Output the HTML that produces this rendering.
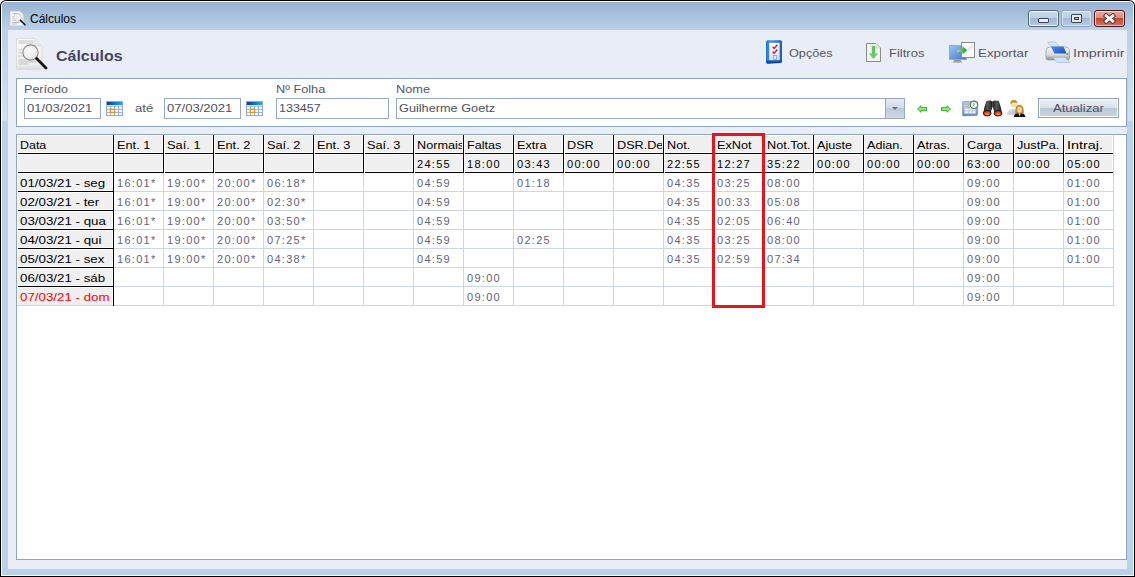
<!DOCTYPE html>
<html><head><meta charset="utf-8">
<style>
*{margin:0;padding:0;box-sizing:border-box}
html,body{width:1135px;height:577px;overflow:hidden;background:#fff}
body{position:relative;font-family:"Liberation Sans", sans-serif;font-size:11px;color:#000}
.ab{position:absolute}
.t{position:absolute;white-space:nowrap;line-height:13px;transform-origin:0 0}
.gl{position:absolute;background:#c9d6e8}
.bk{position:absolute;background:#000}
</style></head><body>
<div class="ab" style="left:0;top:0;width:1135px;height:577px;background:#000;border-radius:6px 6px 0 0"></div><div class="ab" style="left:1px;top:1px;width:1133px;height:575px;background:#fff;border-radius:5px 5px 0 0"></div><div class="ab" style="left:2px;top:2px;width:1131px;height:573px;background:#b9d1ea;border-radius:4px 4px 0 0"></div><div class="ab" style="left:2px;top:2px;width:1131px;height:28px;background:linear-gradient(#99b3d2,#b9d1ea);border-radius:4px 4px 0 0"></div><div class="ab" style="left:2px;top:30px;width:5px;height:91px;background:linear-gradient(#b9d1ea,#d2e2f3)"></div><div class="ab" style="left:1128px;top:30px;width:5px;height:91px;background:linear-gradient(#b9d1ea,#d2e2f3)"></div><div class="ab" style="left:8px;top:30px;width:1119px;height:539px;background:#e9eef6"></div><div class="t" style="left:30px;top:12px;font-size:12px;line-height:14px;letter-spacing:0;color:#000">Cálculos</div><div class="ab" style="left:1028px;top:10px;width:31px;height:17px;border:1px solid #56657c;border-radius:3px;background:linear-gradient(#c8d9ee 0,#bccfe7 7px,#9fb7d5 7px,#b4cae4 100%);box-shadow:inset 0 0 0 1px rgba(255,255,255,.8)"></div><div class="ab" style="left:1061px;top:10px;width:31px;height:17px;border:1px solid #8ea4c0;border-radius:3px;background:linear-gradient(#c6d8ed 0,#bbcfe7 7px,#a4bbd8 7px,#b6cce5 100%);box-shadow:inset 0 0 0 1px rgba(255,255,255,.55)"></div><div class="ab" style="left:1094px;top:10px;width:31px;height:17px;border:1px solid #4a1620;border-radius:3px;background:linear-gradient(#eaa898 0,#dc8c7a 7px,#c4442c 7px,#d8735f 100%);box-shadow:inset 0 0 0 1px rgba(255,225,215,.75)"></div><div class="ab" style="left:1038px;top:18px;width:11px;height:5px;background:#ececec;border:1px solid #3b4558;border-radius:1px"></div><div class="ab" style="left:1071px;top:14px;width:11px;height:9px;background:#e8e8e8;border:1px solid #3b4558;border-radius:1px"></div><div class="ab" style="left:1074px;top:17px;width:5px;height:3px;background:#9fb6d2;border:1px solid #3b4558"></div><svg class="ab" style="left:1103px;top:13px" width="14" height="11" viewBox="0 0 14 11">
<path d="M3.2 2.8 L9.8 8.2 M9.8 2.8 L3.2 8.2" stroke="#3a3f52" stroke-width="4.8" stroke-linecap="square"/>
<path d="M3.2 2.8 L9.8 8.2 M9.8 2.8 L3.2 8.2" stroke="#f2f2f2" stroke-width="2.8" stroke-linecap="square"/>
</svg><svg class="ab" style="left:10px;top:10px" width="17" height="17" viewBox="0 0 17 17">
<path d="M0.5 1.5 H10 L13 4.5 V15.5 H0.5 Z" fill="#f7f7f5" stroke="#e2e2dc" stroke-width="1"/>
<path d="M2 3.5h6M2 7h2M2 10h2M2 12.5h8M2 14h5" stroke="#b0b0b0" stroke-width="0.8"/>
<circle cx="7.5" cy="7.5" r="3.8" fill="#f0f2f4" stroke="#c4c8cc" stroke-width="0.9"/>
<path d="M10.5 10.4 L15 14.8" stroke="#111" stroke-width="1.6" stroke-linecap="round"/>
</svg><svg class="ab" style="left:16px;top:38px" width="33" height="33" viewBox="0 0 33 33">
<defs><linearGradient id="pg" x1="0" y1="0" x2="0" y2="1"><stop offset="0" stop-color="#f8f8f8"/><stop offset="0.85" stop-color="#eeeeee"/><stop offset="1" stop-color="#d8d8d8"/></linearGradient>
<radialGradient id="lg" cx="0.4" cy="0.4" r="0.7"><stop offset="0" stop-color="#fafafa"/><stop offset="1" stop-color="#e2e4e6"/></radialGradient></defs>
<path d="M0.5 0.5 H18 L26 8.5 V31.5 H0.5 Z" fill="url(#pg)" stroke="#dedede"/>
<path d="M18 0.5 V8.5 H26 Z" fill="#e4e4e4"/>
<path d="M2.5 3h15M2.5 5h15M2.5 12h5M2.5 15h5M2.5 18h5M2.5 22h20M2.5 24h18M2.5 26h10" stroke="#c4c4c4" stroke-width="1.2"/>
<circle cx="14.5" cy="14.5" r="7.6" fill="url(#lg)" stroke="#8a8a8a" stroke-width="1.1"/>
<path d="M20.6 20.6 L30 30" stroke="#151515" stroke-width="2.8" stroke-linecap="round"/>
</svg><div class="t" style="left:56px;top:46.5px;font-size:15.5px;line-height:18px;font-weight:bold;transform:scaleX(1.03);color:#45455f">Cálculos</div><div class="t" style="left:789px;top:47px;color:#555568;transform:scaleX(1.152);">Opções</div><div class="t" style="left:889px;top:47px;color:#555568;transform:scaleX(1.184);">Filtros</div><div class="t" style="left:978px;top:47px;color:#555568;transform:scaleX(1.211);">Exportar</div><div class="t" style="left:1073px;top:47px;color:#555568;transform:scaleX(1.299);">Imprimir</div><svg class="ab" style="left:765px;top:39px" width="18" height="26" viewBox="0 0 18 26">
<defs><linearGradient id="og" x1="0" y1="0" x2="1" y2="0"><stop offset="0" stop-color="#2a70d0"/><stop offset="0.3" stop-color="#4a98ea"/><stop offset="1" stop-color="#1a5cc0"/></linearGradient>
<linearGradient id="oi" x1="0" y1="0" x2="0" y2="1"><stop offset="0" stop-color="#ffffff"/><stop offset="1" stop-color="#d6e4f6"/></linearGradient></defs>
<path d="M1 3 Q1 1.2 3 1.2 H15.5 Q17 1.2 17 3 V22 Q17 23.5 15.5 23.6 L3 24.6 Q1 24.8 1 23 Z" fill="url(#og)"/>
<path d="M1.5 21.5 H17 V22.5 Q17 23.8 15.5 23.9 L3 24.7 Q1.3 24.8 1.3 23 Z" fill="#0f4aa8"/>
<rect x="4.2" y="3.8" width="10.4" height="17.4" fill="url(#oi)"/>
<path d="M7.6 7.8 l1.6 1.6 l3.2 -3.6 M7.6 12.6 l1.6 1.6 l3.2 -3.6" stroke="#d42828" stroke-width="1.5" fill="none"/>
<rect x="8.3" y="16.5" width="3.4" height="4" fill="none" stroke="#86a4d4" stroke-width="0.9"/>
</svg><svg class="ab" style="left:866px;top:43px" width="16" height="20" viewBox="0 0 16 20">
<path d="M0.5 0.5 H10 L14.5 5 V18.5 H0.5 Z" fill="#f4f4f4" stroke="#8a8a8a"/>
<path d="M10 0.5 V5 H14.5" fill="#e8e8e8" stroke="#c8c8c8" stroke-width="0.6"/>
<path d="M7.5 3 V12" stroke="#62c462" stroke-width="3.4"/>
<path d="M2.8 10.5 L7.5 16 L12.2 10.5 Z" fill="#6ccc6c"/>
</svg><svg class="ab" style="left:949px;top:42px" width="27" height="22" viewBox="0 0 27 22">
<defs><linearGradient id="sc" x1="0" y1="0" x2="1" y2="1"><stop offset="0" stop-color="#9cc6f6"/><stop offset="1" stop-color="#3f74c8"/></linearGradient>
<linearGradient id="ar" x1="0" y1="0" x2="1" y2="0"><stop offset="0" stop-color="#c8ea90"/><stop offset="0.5" stop-color="#5cc050"/><stop offset="1" stop-color="#139a2a"/></linearGradient>
<linearGradient id="st" x1="0" y1="0" x2="0" y2="1"><stop offset="0" stop-color="#888"/><stop offset="1" stop-color="#c4c4c4"/></linearGradient></defs>
<rect x="0.5" y="3.5" width="17" height="14" fill="url(#sc)" stroke="#a8a8a8" stroke-width="1"/>
<path d="M5.5 18 H11.5 L13.5 21 H3.5 Z" fill="url(#st)"/>
<rect x="12.5" y="0.5" width="13" height="15" fill="#fbfbfb" stroke="#8a8a8a" stroke-width="1"/>
<path d="M24 3 L15 12" stroke="#ececec" stroke-width="3"/>
<path d="M7.5 10 Q9 7 13.5 6.6 V4 L18 8.2 L13.5 12.6 V10 Q10 9.5 7.5 10 Z" fill="url(#ar)"/>
</svg><svg class="ab" style="left:1045px;top:41px" width="26" height="23" viewBox="0 0 26 23">
<defs><linearGradient id="pb" x1="0" y1="0" x2="0" y2="1"><stop offset="0" stop-color="#f4f4f4"/><stop offset="0.6" stop-color="#dcdcdc"/><stop offset="1" stop-color="#8a8a8a"/></linearGradient>
<linearGradient id="pbl" x1="0" y1="0" x2="1" y2="1"><stop offset="0" stop-color="#4a90f0"/><stop offset="1" stop-color="#1a4fc0"/></linearGradient></defs>
<path d="M2.5 1 H10 L16 7 H8 Z" fill="#d6e6fa" stroke="#a8bcd8" stroke-width="0.7"/>
<path d="M1 10 Q1 6 5 6 H20 Q24.5 6 24.5 10 V17.5 Q24.5 19 22 19 H3 Q1 19 1 17 Z" fill="url(#pb)" stroke="#9a9a9a" stroke-width="0.7"/>
<path d="M6 5.5 H18.5 L21.5 12.5 H9.5 Z" fill="url(#pbl)"/>
<path d="M8 16.5 H20 L25 21.5 H12 Z" fill="#d2e2f8" stroke="#a8bcd8" stroke-width="0.7"/>
<rect x="21.5" y="12" width="2" height="2" fill="#3c3"/>
</svg><div class="ab" style="left:16px;top:78px;width:1111px;height:49px;background:#fff;border:1px solid #8ea4c2"></div><div class="t" style="left:24px;top:83px;color:#555568;transform:scaleX(1.142);">Período</div><div class="t" style="left:276px;top:83px;color:#555568;transform:scaleX(1.159);">Nº Folha</div><div class="t" style="left:396px;top:83px;color:#555568;transform:scaleX(1.159);">Nome</div><div class="ab" style="left:24px;top:98px;width:77px;height:21px;background:#fff;border:1px solid #96a9c8"></div><div class="t" style="left:27px;top:102px;color:#505060;transform:scaleX(1.187);">01/03/2021</div><div class="ab" style="left:164px;top:98px;width:77px;height:21px;background:#fff;border:1px solid #96a9c8"></div><div class="t" style="left:167px;top:102px;color:#505060;transform:scaleX(1.187);">07/03/2021</div><div class="ab" style="left:276px;top:98px;width:113px;height:21px;background:#fff;border:1px solid #96a9c8"></div><div class="t" style="left:279px;top:102px;color:#505060;transform:scaleX(1.135);">133457</div><div class="ab" style="left:396px;top:98px;width:509px;height:21px;background:#fff;border:1px solid #96a9c8"></div><div class="t" style="left:399px;top:102px;color:#505060;transform:scaleX(1.156);">Guilherme Goetz</div><div class="t" style="left:135px;top:102px;color:#555568;transform:scaleX(1.201);">até</div><svg class="ab" style="left:106px;top:101px" width="17" height="15" viewBox="0 0 17 15">
<defs><linearGradient id="cg106" x1="0" y1="0" x2="1" y2="0"><stop offset="0" stop-color="#12388e"/><stop offset="1" stop-color="#10b0f4"/></linearGradient></defs>
<rect x="0.5" y="0.5" width="16" height="14" fill="#fff" stroke="#8eaad8" stroke-width="1"/>
<rect x="1" y="1" width="15" height="3" fill="url(#cg106)"/>
<path d="M0.5 5.2H16.5M0.5 8.3H16.5M0.5 11.4H16.5M4.5 5V14.5M8.5 5V14.5M12.5 5V14.5" stroke="#92aedc" stroke-width="1"/>
<rect x="4.3" y="8.3" width="4.4" height="3.1" fill="#fff" stroke="#f39200" stroke-width="1.2"/>
</svg><svg class="ab" style="left:246px;top:101px" width="17" height="15" viewBox="0 0 17 15">
<defs><linearGradient id="cg246" x1="0" y1="0" x2="1" y2="0"><stop offset="0" stop-color="#12388e"/><stop offset="1" stop-color="#10b0f4"/></linearGradient></defs>
<rect x="0.5" y="0.5" width="16" height="14" fill="#fff" stroke="#8eaad8" stroke-width="1"/>
<rect x="1" y="1" width="15" height="3" fill="url(#cg246)"/>
<path d="M0.5 5.2H16.5M0.5 8.3H16.5M0.5 11.4H16.5M4.5 5V14.5M8.5 5V14.5M12.5 5V14.5" stroke="#92aedc" stroke-width="1"/>
<rect x="4.3" y="8.3" width="4.4" height="3.1" fill="#fff" stroke="#f39200" stroke-width="1.2"/>
</svg><div class="ab" style="left:885px;top:98px;width:20px;height:21px;border:1px solid #96a9c8;background:linear-gradient(#e6eaf3 0,#d3dbe7 9px,#bac8da 9px,#cfd8e5 100%)"></div><div class="ab" style="left:892px;top:107px;width:0;height:0;border-left:3px solid transparent;border-right:3px solid transparent;border-top:3px solid #6c6c76"></div><svg class="ab" style="left:916px;top:104px" width="12" height="10" viewBox="0 0 12 10">
<path d="M1.5 5 L5 1.7 V3.4 H10.5 V6.6 H5 V8.3 Z" fill="#98e47a" stroke="#33b533" stroke-width="1" stroke-linejoin="round"/></svg><svg class="ab" style="left:940px;top:104px" width="12" height="10" viewBox="0 0 12 10">
<path d="M10.5 5 L7 1.7 V3.4 H1.5 V6.6 H7 V8.3 Z" fill="#98e47a" stroke="#33b533" stroke-width="1" stroke-linejoin="round"/></svg><svg class="ab" style="left:962px;top:100px" width="17" height="17" viewBox="0 0 17 17">
<defs><linearGradient id="cc" x1="0" y1="0" x2="0" y2="1"><stop offset="0" stop-color="#b4cdf0"/><stop offset="1" stop-color="#5f88c8"/></linearGradient></defs>
<path d="M0.6 2.2 Q0.6 1.6 1.4 1.6 H15 Q15.6 1.6 15.6 2.4 V14.6 Q15.6 15.4 14.8 15.5 L1.6 15.9 Q0.6 15.9 0.6 15 Z" fill="url(#cc)" stroke="#6b8fc8" stroke-width="0.7"/>
<rect x="2.5" y="5" width="11" height="8.5" fill="#f4f7fc"/>
<path d="M2.5 8.2H13.5M2.5 10.8H13.5M6.8 5V13.5M10.2 5V13.5" stroke="#aabbd6" stroke-width="0.8"/>
<rect x="2.7" y="5.3" width="5" height="2.6" fill="#dcae98"/>
<circle cx="12" cy="4.8" r="3.7" fill="#eef8ee" stroke="#43803f" stroke-width="1.1"/>
<path d="M12 2.8 V5 L10.8 6" stroke="#667" stroke-width="0.7" fill="none"/>
</svg><svg class="ab" style="left:983px;top:100px" width="20" height="18" viewBox="0 0 20 18">
<defs><linearGradient id="bg1" x1="0" y1="0" x2="1" y2="0"><stop offset="0" stop-color="#1a1a1a"/><stop offset="0.45" stop-color="#5a5a5a"/><stop offset="1" stop-color="#151515"/></linearGradient>
<radialGradient id="ln" cx="0.5" cy="0.7" r="0.6"><stop offset="0" stop-color="#ffb070"/><stop offset="0.5" stop-color="#f04a1a"/><stop offset="1" stop-color="#b81c08"/></radialGradient></defs>
<path d="M3.5 0.8 L7.5 0.5 L9.6 1.5 L9.6 6.5 L7.8 12 L0.6 12 L1.2 8 Z" fill="url(#bg1)"/>
<path d="M15.7 0.8 L11.7 0.5 L9.6 1.5 L9.6 6.5 L11.4 12 L18.6 12 L18 8 Z" fill="url(#bg1)"/>
<ellipse cx="4.2" cy="13.2" rx="3.9" ry="2.8" fill="url(#ln)" stroke="#1c1c1c" stroke-width="1"/>
<ellipse cx="15" cy="13.2" rx="3.9" ry="2.8" fill="url(#ln)" stroke="#1c1c1c" stroke-width="1"/>
</svg><svg class="ab" style="left:1004px;top:98px" width="25" height="21" viewBox="0 0 25 21">
<defs><linearGradient id="mb" x1="0" y1="0" x2="1" y2="1"><stop offset="0" stop-color="#dfe2f0"/><stop offset="1" stop-color="#b4b8d4"/></linearGradient></defs>
<path d="M3 16.8 Q3.3 11 9.5 11 Q13.5 11 13.5 16.8 Z" fill="url(#mb)"/>
<ellipse cx="9.8" cy="6.3" rx="2.9" ry="3.4" fill="#f8dab0"/>
<path d="M6.3 6.5 Q5.8 2 9.8 2 Q13.6 2 13.4 6 Q12.5 3.8 9 4.5 Q7.5 5 6.3 6.5 Z" fill="#b98a2c"/>
<path d="M11.3 15.2 Q10.8 6.8 15.6 6.8 Q20.4 6.8 19.8 15.2 Z" fill="#c08e32"/>
<ellipse cx="15.6" cy="11.8" rx="2.3" ry="3" fill="#f8d2a4"/>
<path d="M9.8 19 Q10.2 15.3 14 15.2 H17.2 Q21 15.3 21.3 19 Z" fill="#111"/>
<path d="M14.4 15.2 L15.6 18.6 L16.8 15.2 Z" fill="#f0c890"/>
</svg><div class="ab" style="left:1038px;top:98px;width:81px;height:20px;border:1px solid #8fa5c4;background:linear-gradient(#eef1f5 0,#d9e0ea 9px,#b7c5d8 9px,#cdd7e4 100%);box-shadow:inset 0 0 0 1px #fff"></div><div class="t" style="left:1053px;top:102px;color:#505060;transform:scaleX(1.186);">Atualizar</div><div class="ab" style="left:16px;top:134px;width:1111px;height:426px;background:#fff;border:1px solid #8ea6c6"></div><div class="ab" style="left:17px;top:135px;width:96px;height:18px;background:#f0f0f0;border:1px solid #fff"></div><div class="bk" style="left:113px;top:135px;width:1px;height:19px"></div><div class="bk" style="left:18px;top:153px;width:95px;height:1px"></div><div class="ab" style="left:114px;top:135px;width:49px;height:18px;background:#f0f0f0;border:1px solid #fff"></div><div class="bk" style="left:163px;top:135px;width:1px;height:19px"></div><div class="bk" style="left:115px;top:153px;width:48px;height:1px"></div><div class="ab" style="left:164px;top:135px;width:49px;height:18px;background:#f0f0f0;border:1px solid #fff"></div><div class="bk" style="left:213px;top:135px;width:1px;height:19px"></div><div class="bk" style="left:165px;top:153px;width:48px;height:1px"></div><div class="ab" style="left:214px;top:135px;width:49px;height:18px;background:#f0f0f0;border:1px solid #fff"></div><div class="bk" style="left:263px;top:135px;width:1px;height:19px"></div><div class="bk" style="left:215px;top:153px;width:48px;height:1px"></div><div class="ab" style="left:264px;top:135px;width:49px;height:18px;background:#f0f0f0;border:1px solid #fff"></div><div class="bk" style="left:313px;top:135px;width:1px;height:19px"></div><div class="bk" style="left:265px;top:153px;width:48px;height:1px"></div><div class="ab" style="left:314px;top:135px;width:49px;height:18px;background:#f0f0f0;border:1px solid #fff"></div><div class="bk" style="left:363px;top:135px;width:1px;height:19px"></div><div class="bk" style="left:315px;top:153px;width:48px;height:1px"></div><div class="ab" style="left:364px;top:135px;width:49px;height:18px;background:#f0f0f0;border:1px solid #fff"></div><div class="bk" style="left:413px;top:135px;width:1px;height:19px"></div><div class="bk" style="left:365px;top:153px;width:48px;height:1px"></div><div class="ab" style="left:414px;top:135px;width:49px;height:18px;background:#f0f0f0;border:1px solid #fff"></div><div class="bk" style="left:463px;top:135px;width:1px;height:19px"></div><div class="bk" style="left:415px;top:153px;width:48px;height:1px"></div><div class="ab" style="left:464px;top:135px;width:49px;height:18px;background:#f0f0f0;border:1px solid #fff"></div><div class="bk" style="left:513px;top:135px;width:1px;height:19px"></div><div class="bk" style="left:465px;top:153px;width:48px;height:1px"></div><div class="ab" style="left:514px;top:135px;width:49px;height:18px;background:#f0f0f0;border:1px solid #fff"></div><div class="bk" style="left:563px;top:135px;width:1px;height:19px"></div><div class="bk" style="left:515px;top:153px;width:48px;height:1px"></div><div class="ab" style="left:564px;top:135px;width:49px;height:18px;background:#f0f0f0;border:1px solid #fff"></div><div class="bk" style="left:613px;top:135px;width:1px;height:19px"></div><div class="bk" style="left:565px;top:153px;width:48px;height:1px"></div><div class="ab" style="left:614px;top:135px;width:49px;height:18px;background:#f0f0f0;border:1px solid #fff"></div><div class="bk" style="left:663px;top:135px;width:1px;height:19px"></div><div class="bk" style="left:615px;top:153px;width:48px;height:1px"></div><div class="ab" style="left:664px;top:135px;width:49px;height:18px;background:#f0f0f0;border:1px solid #fff"></div><div class="bk" style="left:713px;top:135px;width:1px;height:19px"></div><div class="bk" style="left:665px;top:153px;width:48px;height:1px"></div><div class="ab" style="left:714px;top:135px;width:49px;height:18px;background:#f0f0f0;border:1px solid #fff"></div><div class="bk" style="left:763px;top:135px;width:1px;height:19px"></div><div class="bk" style="left:715px;top:153px;width:48px;height:1px"></div><div class="ab" style="left:764px;top:135px;width:49px;height:18px;background:#f0f0f0;border:1px solid #fff"></div><div class="bk" style="left:813px;top:135px;width:1px;height:19px"></div><div class="bk" style="left:765px;top:153px;width:48px;height:1px"></div><div class="ab" style="left:814px;top:135px;width:49px;height:18px;background:#f0f0f0;border:1px solid #fff"></div><div class="bk" style="left:863px;top:135px;width:1px;height:19px"></div><div class="bk" style="left:815px;top:153px;width:48px;height:1px"></div><div class="ab" style="left:864px;top:135px;width:49px;height:18px;background:#f0f0f0;border:1px solid #fff"></div><div class="bk" style="left:913px;top:135px;width:1px;height:19px"></div><div class="bk" style="left:865px;top:153px;width:48px;height:1px"></div><div class="ab" style="left:914px;top:135px;width:49px;height:18px;background:#f0f0f0;border:1px solid #fff"></div><div class="bk" style="left:963px;top:135px;width:1px;height:19px"></div><div class="bk" style="left:915px;top:153px;width:48px;height:1px"></div><div class="ab" style="left:964px;top:135px;width:49px;height:18px;background:#f0f0f0;border:1px solid #fff"></div><div class="bk" style="left:1013px;top:135px;width:1px;height:19px"></div><div class="bk" style="left:965px;top:153px;width:48px;height:1px"></div><div class="ab" style="left:1014px;top:135px;width:49px;height:18px;background:#f0f0f0;border:1px solid #fff"></div><div class="bk" style="left:1063px;top:135px;width:1px;height:19px"></div><div class="bk" style="left:1015px;top:153px;width:48px;height:1px"></div><div class="ab" style="left:1064px;top:135px;width:49px;height:18px;background:#f0f0f0;border:1px solid #fff"></div><div class="bk" style="left:1065px;top:153px;width:48px;height:1px"></div><div class="ab" style="left:17px;top:154px;width:96px;height:18px;background:#f0f0f0;border:1px solid #fff"></div><div class="bk" style="left:113px;top:154px;width:1px;height:19px"></div><div class="bk" style="left:18px;top:172px;width:95px;height:1px"></div><div class="ab" style="left:114px;top:154px;width:49px;height:18px;background:#f0f0f0;border:1px solid #fff"></div><div class="bk" style="left:163px;top:154px;width:1px;height:19px"></div><div class="bk" style="left:115px;top:172px;width:48px;height:1px"></div><div class="ab" style="left:164px;top:154px;width:49px;height:18px;background:#f0f0f0;border:1px solid #fff"></div><div class="bk" style="left:213px;top:154px;width:1px;height:19px"></div><div class="bk" style="left:165px;top:172px;width:48px;height:1px"></div><div class="ab" style="left:214px;top:154px;width:49px;height:18px;background:#f0f0f0;border:1px solid #fff"></div><div class="bk" style="left:263px;top:154px;width:1px;height:19px"></div><div class="bk" style="left:215px;top:172px;width:48px;height:1px"></div><div class="ab" style="left:264px;top:154px;width:49px;height:18px;background:#f0f0f0;border:1px solid #fff"></div><div class="bk" style="left:313px;top:154px;width:1px;height:19px"></div><div class="bk" style="left:265px;top:172px;width:48px;height:1px"></div><div class="ab" style="left:314px;top:154px;width:49px;height:18px;background:#f0f0f0;border:1px solid #fff"></div><div class="bk" style="left:363px;top:154px;width:1px;height:19px"></div><div class="bk" style="left:315px;top:172px;width:48px;height:1px"></div><div class="ab" style="left:364px;top:154px;width:49px;height:18px;background:#f0f0f0;border:1px solid #fff"></div><div class="bk" style="left:413px;top:154px;width:1px;height:19px"></div><div class="bk" style="left:365px;top:172px;width:48px;height:1px"></div><div class="ab" style="left:414px;top:154px;width:49px;height:18px;background:#f0f0f0;border:1px solid #fff"></div><div class="bk" style="left:463px;top:154px;width:1px;height:19px"></div><div class="bk" style="left:415px;top:172px;width:48px;height:1px"></div><div class="ab" style="left:464px;top:154px;width:49px;height:18px;background:#f0f0f0;border:1px solid #fff"></div><div class="bk" style="left:513px;top:154px;width:1px;height:19px"></div><div class="bk" style="left:465px;top:172px;width:48px;height:1px"></div><div class="ab" style="left:514px;top:154px;width:49px;height:18px;background:#f0f0f0;border:1px solid #fff"></div><div class="bk" style="left:563px;top:154px;width:1px;height:19px"></div><div class="bk" style="left:515px;top:172px;width:48px;height:1px"></div><div class="ab" style="left:564px;top:154px;width:49px;height:18px;background:#f0f0f0;border:1px solid #fff"></div><div class="bk" style="left:613px;top:154px;width:1px;height:19px"></div><div class="bk" style="left:565px;top:172px;width:48px;height:1px"></div><div class="ab" style="left:614px;top:154px;width:49px;height:18px;background:#f0f0f0;border:1px solid #fff"></div><div class="bk" style="left:663px;top:154px;width:1px;height:19px"></div><div class="bk" style="left:615px;top:172px;width:48px;height:1px"></div><div class="ab" style="left:664px;top:154px;width:49px;height:18px;background:#f0f0f0;border:1px solid #fff"></div><div class="bk" style="left:713px;top:154px;width:1px;height:19px"></div><div class="bk" style="left:665px;top:172px;width:48px;height:1px"></div><div class="ab" style="left:714px;top:154px;width:49px;height:18px;background:#f0f0f0;border:1px solid #fff"></div><div class="bk" style="left:763px;top:154px;width:1px;height:19px"></div><div class="bk" style="left:715px;top:172px;width:48px;height:1px"></div><div class="ab" style="left:764px;top:154px;width:49px;height:18px;background:#f0f0f0;border:1px solid #fff"></div><div class="bk" style="left:813px;top:154px;width:1px;height:19px"></div><div class="bk" style="left:765px;top:172px;width:48px;height:1px"></div><div class="ab" style="left:814px;top:154px;width:49px;height:18px;background:#f0f0f0;border:1px solid #fff"></div><div class="bk" style="left:863px;top:154px;width:1px;height:19px"></div><div class="bk" style="left:815px;top:172px;width:48px;height:1px"></div><div class="ab" style="left:864px;top:154px;width:49px;height:18px;background:#f0f0f0;border:1px solid #fff"></div><div class="bk" style="left:913px;top:154px;width:1px;height:19px"></div><div class="bk" style="left:865px;top:172px;width:48px;height:1px"></div><div class="ab" style="left:914px;top:154px;width:49px;height:18px;background:#f0f0f0;border:1px solid #fff"></div><div class="bk" style="left:963px;top:154px;width:1px;height:19px"></div><div class="bk" style="left:915px;top:172px;width:48px;height:1px"></div><div class="ab" style="left:964px;top:154px;width:49px;height:18px;background:#f0f0f0;border:1px solid #fff"></div><div class="bk" style="left:1013px;top:154px;width:1px;height:19px"></div><div class="bk" style="left:965px;top:172px;width:48px;height:1px"></div><div class="ab" style="left:1014px;top:154px;width:49px;height:18px;background:#f0f0f0;border:1px solid #fff"></div><div class="bk" style="left:1063px;top:154px;width:1px;height:19px"></div><div class="bk" style="left:1015px;top:172px;width:48px;height:1px"></div><div class="ab" style="left:1064px;top:154px;width:49px;height:18px;background:#f0f0f0;border:1px solid #fff"></div><div class="bk" style="left:1065px;top:172px;width:48px;height:1px"></div><div class="ab" style="left:17px;top:173px;width:96px;height:18px;background:#f0f0f0;border:1px solid #fff;"></div><div class="bk" style="left:18px;top:191px;width:95px;height:1px"></div><div class="ab" style="left:17px;top:192px;width:96px;height:18px;background:#f0f0f0;border:1px solid #fff;"></div><div class="bk" style="left:18px;top:210px;width:95px;height:1px"></div><div class="ab" style="left:17px;top:211px;width:96px;height:18px;background:#f0f0f0;border:1px solid #fff;"></div><div class="bk" style="left:18px;top:229px;width:95px;height:1px"></div><div class="ab" style="left:17px;top:230px;width:96px;height:18px;background:#f0f0f0;border:1px solid #fff;"></div><div class="bk" style="left:18px;top:248px;width:95px;height:1px"></div><div class="ab" style="left:17px;top:249px;width:96px;height:18px;background:#f0f0f0;border:1px solid #fff;"></div><div class="bk" style="left:18px;top:267px;width:95px;height:1px"></div><div class="ab" style="left:17px;top:268px;width:96px;height:18px;background:#f0f0f0;border:1px solid #fff;"></div><div class="bk" style="left:18px;top:286px;width:95px;height:1px"></div><div class="ab" style="left:17px;top:287px;width:96px;height:18px;background:#f0f0f0;border:1px solid #fff;border-bottom:0;"></div><div class="gl" style="left:17px;top:305px;width:96px;height:1px"></div><div class="bk" style="left:113px;top:135px;width:1px;height:171px"></div><div class="gl" style="left:114px;top:191px;width:1000px;height:1px"></div><div class="gl" style="left:114px;top:210px;width:1000px;height:1px"></div><div class="gl" style="left:114px;top:229px;width:1000px;height:1px"></div><div class="gl" style="left:114px;top:248px;width:1000px;height:1px"></div><div class="gl" style="left:114px;top:267px;width:1000px;height:1px"></div><div class="gl" style="left:114px;top:286px;width:1000px;height:1px"></div><div class="gl" style="left:114px;top:305px;width:1000px;height:1px"></div><div class="gl" style="left:163px;top:173px;width:1px;height:133px"></div><div class="gl" style="left:213px;top:173px;width:1px;height:133px"></div><div class="gl" style="left:263px;top:173px;width:1px;height:133px"></div><div class="gl" style="left:313px;top:173px;width:1px;height:133px"></div><div class="gl" style="left:363px;top:173px;width:1px;height:133px"></div><div class="gl" style="left:413px;top:173px;width:1px;height:133px"></div><div class="gl" style="left:463px;top:173px;width:1px;height:133px"></div><div class="gl" style="left:513px;top:173px;width:1px;height:133px"></div><div class="gl" style="left:563px;top:173px;width:1px;height:133px"></div><div class="gl" style="left:613px;top:173px;width:1px;height:133px"></div><div class="gl" style="left:663px;top:173px;width:1px;height:133px"></div><div class="gl" style="left:713px;top:173px;width:1px;height:133px"></div><div class="gl" style="left:763px;top:173px;width:1px;height:133px"></div><div class="gl" style="left:813px;top:173px;width:1px;height:133px"></div><div class="gl" style="left:863px;top:173px;width:1px;height:133px"></div><div class="gl" style="left:913px;top:173px;width:1px;height:133px"></div><div class="gl" style="left:963px;top:173px;width:1px;height:133px"></div><div class="gl" style="left:1013px;top:173px;width:1px;height:133px"></div><div class="gl" style="left:1063px;top:173px;width:1px;height:133px"></div><div class="gl" style="left:1113px;top:173px;width:1px;height:133px"></div><div class="gl" style="left:1113px;top:135px;width:1px;height:38px"></div><div class="t" style="left:20px;top:139px;color:#000;transform:scaleX(1.131);">Data</div><div class="ab" style="left:116px;top:136px;width:46px;height:16px;overflow:hidden"><div class="t" style="left:1px;top:3px;color:#000;transform:scaleX(1.160);">Ent. 1</div></div><div class="ab" style="left:166px;top:136px;width:46px;height:16px;overflow:hidden"><div class="t" style="left:1px;top:3px;color:#000;transform:scaleX(1.170);">Saí. 1</div></div><div class="ab" style="left:216px;top:136px;width:46px;height:16px;overflow:hidden"><div class="t" style="left:1px;top:3px;color:#000;transform:scaleX(1.160);">Ent. 2</div></div><div class="ab" style="left:266px;top:136px;width:46px;height:16px;overflow:hidden"><div class="t" style="left:1px;top:3px;color:#000;transform:scaleX(1.160);">Saí. 2</div></div><div class="ab" style="left:316px;top:136px;width:46px;height:16px;overflow:hidden"><div class="t" style="left:1px;top:3px;color:#000;transform:scaleX(1.160);">Ent. 3</div></div><div class="ab" style="left:366px;top:136px;width:46px;height:16px;overflow:hidden"><div class="t" style="left:1px;top:3px;color:#000;transform:scaleX(1.160);">Saí. 3</div></div><div class="ab" style="left:416px;top:136px;width:46px;height:16px;overflow:hidden"><div class="t" style="left:1px;top:3px;color:#000;transform:scaleX(1.150);">Normais</div></div><div class="t" style="left:417px;top:158px;color:#000;letter-spacing:1.3px;">24:55</div><div class="ab" style="left:466px;top:136px;width:46px;height:16px;overflow:hidden"><div class="t" style="left:1px;top:3px;color:#000;transform:scaleX(1.150);">Faltas</div></div><div class="t" style="left:467px;top:158px;color:#000;letter-spacing:1.3px;">18:00</div><div class="ab" style="left:516px;top:136px;width:46px;height:16px;overflow:hidden"><div class="t" style="left:1px;top:3px;color:#000;transform:scaleX(1.150);">Extra</div></div><div class="t" style="left:517px;top:158px;color:#000;letter-spacing:1.3px;">03:43</div><div class="ab" style="left:566px;top:136px;width:46px;height:16px;overflow:hidden"><div class="t" style="left:1px;top:3px;color:#000;transform:scaleX(1.150);">DSR</div></div><div class="t" style="left:567px;top:158px;color:#000;letter-spacing:1.3px;">00:00</div><div class="ab" style="left:616px;top:136px;width:46px;height:16px;overflow:hidden"><div class="t" style="left:1px;top:3px;color:#000;transform:scaleX(1.150);">DSR.Desc</div></div><div class="t" style="left:617px;top:158px;color:#000;letter-spacing:1.3px;">00:00</div><div class="ab" style="left:666px;top:136px;width:46px;height:16px;overflow:hidden"><div class="t" style="left:1px;top:3px;color:#000;transform:scaleX(1.150);">Not.</div></div><div class="t" style="left:667px;top:158px;color:#000;letter-spacing:1.3px;">22:55</div><div class="ab" style="left:716px;top:136px;width:46px;height:16px;overflow:hidden"><div class="t" style="left:1px;top:3px;color:#000;transform:scaleX(1.152);">ExNot</div></div><div class="t" style="left:717px;top:158px;color:#000;letter-spacing:1.3px;">12:27</div><div class="ab" style="left:766px;top:136px;width:46px;height:16px;overflow:hidden"><div class="t" style="left:1px;top:3px;color:#000;transform:scaleX(1.150);">Not.Tot.</div></div><div class="t" style="left:767px;top:158px;color:#000;letter-spacing:1.3px;">35:22</div><div class="ab" style="left:816px;top:136px;width:46px;height:16px;overflow:hidden"><div class="t" style="left:1px;top:3px;color:#000;transform:scaleX(1.150);">Ajuste</div></div><div class="t" style="left:817px;top:158px;color:#000;letter-spacing:1.3px;">00:00</div><div class="ab" style="left:866px;top:136px;width:46px;height:16px;overflow:hidden"><div class="t" style="left:1px;top:3px;color:#000;transform:scaleX(1.150);">Adian.</div></div><div class="t" style="left:867px;top:158px;color:#000;letter-spacing:1.3px;">00:00</div><div class="ab" style="left:916px;top:136px;width:46px;height:16px;overflow:hidden"><div class="t" style="left:1px;top:3px;color:#000;transform:scaleX(1.150);">Atras.</div></div><div class="t" style="left:917px;top:158px;color:#000;letter-spacing:1.3px;">00:00</div><div class="ab" style="left:966px;top:136px;width:46px;height:16px;overflow:hidden"><div class="t" style="left:1px;top:3px;color:#000;transform:scaleX(1.150);">Carga</div></div><div class="t" style="left:967px;top:158px;color:#000;letter-spacing:1.3px;">63:00</div><div class="ab" style="left:1016px;top:136px;width:46px;height:16px;overflow:hidden"><div class="t" style="left:1px;top:3px;color:#000;transform:scaleX(1.150);">JustPa.</div></div><div class="t" style="left:1017px;top:158px;color:#000;letter-spacing:1.3px;">00:00</div><div class="ab" style="left:1066px;top:136px;width:46px;height:16px;overflow:hidden"><div class="t" style="left:1px;top:3px;color:#000;transform:scaleX(1.306);">Intraj.</div></div><div class="t" style="left:1067px;top:158px;color:#000;letter-spacing:1.3px;">05:00</div><div class="t" style="left:20px;top:177px;color:#000;transform:scaleX(1.210);">01/03/21 - seg</div><div class="t" style="left:117px;top:177px;color:#62627a;letter-spacing:1.3px;">16:01*</div><div class="t" style="left:167px;top:177px;color:#62627a;letter-spacing:1.3px;">19:00*</div><div class="t" style="left:217px;top:177px;color:#62627a;letter-spacing:1.3px;">20:00*</div><div class="t" style="left:267px;top:177px;color:#62627a;letter-spacing:1.3px;">06:18*</div><div class="t" style="left:417px;top:177px;color:#62627a;letter-spacing:1.3px;">04:59</div><div class="t" style="left:517px;top:177px;color:#62627a;letter-spacing:1.3px;">01:18</div><div class="t" style="left:667px;top:177px;color:#62627a;letter-spacing:1.3px;">04:35</div><div class="t" style="left:717px;top:177px;color:#62627a;letter-spacing:1.3px;">03:25</div><div class="t" style="left:767px;top:177px;color:#62627a;letter-spacing:1.3px;">08:00</div><div class="t" style="left:967px;top:177px;color:#62627a;letter-spacing:1.3px;">09:00</div><div class="t" style="left:1067px;top:177px;color:#62627a;letter-spacing:1.3px;">01:00</div><div class="t" style="left:20px;top:196px;color:#000;transform:scaleX(1.210);">02/03/21 - ter</div><div class="t" style="left:117px;top:196px;color:#62627a;letter-spacing:1.3px;">16:01*</div><div class="t" style="left:167px;top:196px;color:#62627a;letter-spacing:1.3px;">19:00*</div><div class="t" style="left:217px;top:196px;color:#62627a;letter-spacing:1.3px;">20:00*</div><div class="t" style="left:267px;top:196px;color:#62627a;letter-spacing:1.3px;">02:30*</div><div class="t" style="left:417px;top:196px;color:#62627a;letter-spacing:1.3px;">04:59</div><div class="t" style="left:667px;top:196px;color:#62627a;letter-spacing:1.3px;">04:35</div><div class="t" style="left:717px;top:196px;color:#62627a;letter-spacing:1.3px;">00:33</div><div class="t" style="left:767px;top:196px;color:#62627a;letter-spacing:1.3px;">05:08</div><div class="t" style="left:967px;top:196px;color:#62627a;letter-spacing:1.3px;">09:00</div><div class="t" style="left:1067px;top:196px;color:#62627a;letter-spacing:1.3px;">01:00</div><div class="t" style="left:20px;top:215px;color:#000;transform:scaleX(1.210);">03/03/21 - qua</div><div class="t" style="left:117px;top:215px;color:#62627a;letter-spacing:1.3px;">16:01*</div><div class="t" style="left:167px;top:215px;color:#62627a;letter-spacing:1.3px;">19:00*</div><div class="t" style="left:217px;top:215px;color:#62627a;letter-spacing:1.3px;">20:00*</div><div class="t" style="left:267px;top:215px;color:#62627a;letter-spacing:1.3px;">03:50*</div><div class="t" style="left:417px;top:215px;color:#62627a;letter-spacing:1.3px;">04:59</div><div class="t" style="left:667px;top:215px;color:#62627a;letter-spacing:1.3px;">04:35</div><div class="t" style="left:717px;top:215px;color:#62627a;letter-spacing:1.3px;">02:05</div><div class="t" style="left:767px;top:215px;color:#62627a;letter-spacing:1.3px;">06:40</div><div class="t" style="left:967px;top:215px;color:#62627a;letter-spacing:1.3px;">09:00</div><div class="t" style="left:1067px;top:215px;color:#62627a;letter-spacing:1.3px;">01:00</div><div class="t" style="left:20px;top:234px;color:#000;transform:scaleX(1.210);">04/03/21 - qui</div><div class="t" style="left:117px;top:234px;color:#62627a;letter-spacing:1.3px;">16:01*</div><div class="t" style="left:167px;top:234px;color:#62627a;letter-spacing:1.3px;">19:00*</div><div class="t" style="left:217px;top:234px;color:#62627a;letter-spacing:1.3px;">20:00*</div><div class="t" style="left:267px;top:234px;color:#62627a;letter-spacing:1.3px;">07:25*</div><div class="t" style="left:417px;top:234px;color:#62627a;letter-spacing:1.3px;">04:59</div><div class="t" style="left:517px;top:234px;color:#62627a;letter-spacing:1.3px;">02:25</div><div class="t" style="left:667px;top:234px;color:#62627a;letter-spacing:1.3px;">04:35</div><div class="t" style="left:717px;top:234px;color:#62627a;letter-spacing:1.3px;">03:25</div><div class="t" style="left:767px;top:234px;color:#62627a;letter-spacing:1.3px;">08:00</div><div class="t" style="left:967px;top:234px;color:#62627a;letter-spacing:1.3px;">09:00</div><div class="t" style="left:1067px;top:234px;color:#62627a;letter-spacing:1.3px;">01:00</div><div class="t" style="left:20px;top:253px;color:#000;transform:scaleX(1.210);">05/03/21 - sex</div><div class="t" style="left:117px;top:253px;color:#62627a;letter-spacing:1.3px;">16:01*</div><div class="t" style="left:167px;top:253px;color:#62627a;letter-spacing:1.3px;">19:00*</div><div class="t" style="left:217px;top:253px;color:#62627a;letter-spacing:1.3px;">20:00*</div><div class="t" style="left:267px;top:253px;color:#62627a;letter-spacing:1.3px;">04:38*</div><div class="t" style="left:417px;top:253px;color:#62627a;letter-spacing:1.3px;">04:59</div><div class="t" style="left:667px;top:253px;color:#62627a;letter-spacing:1.3px;">04:35</div><div class="t" style="left:717px;top:253px;color:#62627a;letter-spacing:1.3px;">02:59</div><div class="t" style="left:767px;top:253px;color:#62627a;letter-spacing:1.3px;">07:34</div><div class="t" style="left:967px;top:253px;color:#62627a;letter-spacing:1.3px;">09:00</div><div class="t" style="left:1067px;top:253px;color:#62627a;letter-spacing:1.3px;">01:00</div><div class="t" style="left:20px;top:272px;color:#000;transform:scaleX(1.210);">06/03/21 - sáb</div><div class="t" style="left:467px;top:272px;color:#62627a;letter-spacing:1.3px;">09:00</div><div class="t" style="left:967px;top:272px;color:#62627a;letter-spacing:1.3px;">09:00</div><div class="t" style="left:20px;top:291px;color:#ff0000;transform:scaleX(1.210);">07/03/21 - dom</div><div class="t" style="left:467px;top:291px;color:#62627a;letter-spacing:1.3px;">09:00</div><div class="t" style="left:967px;top:291px;color:#62627a;letter-spacing:1.3px;">09:00</div><div class="ab" style="left:712px;top:133px;width:53px;height:175px;border:3px solid #e8141c"></div></body></html>
